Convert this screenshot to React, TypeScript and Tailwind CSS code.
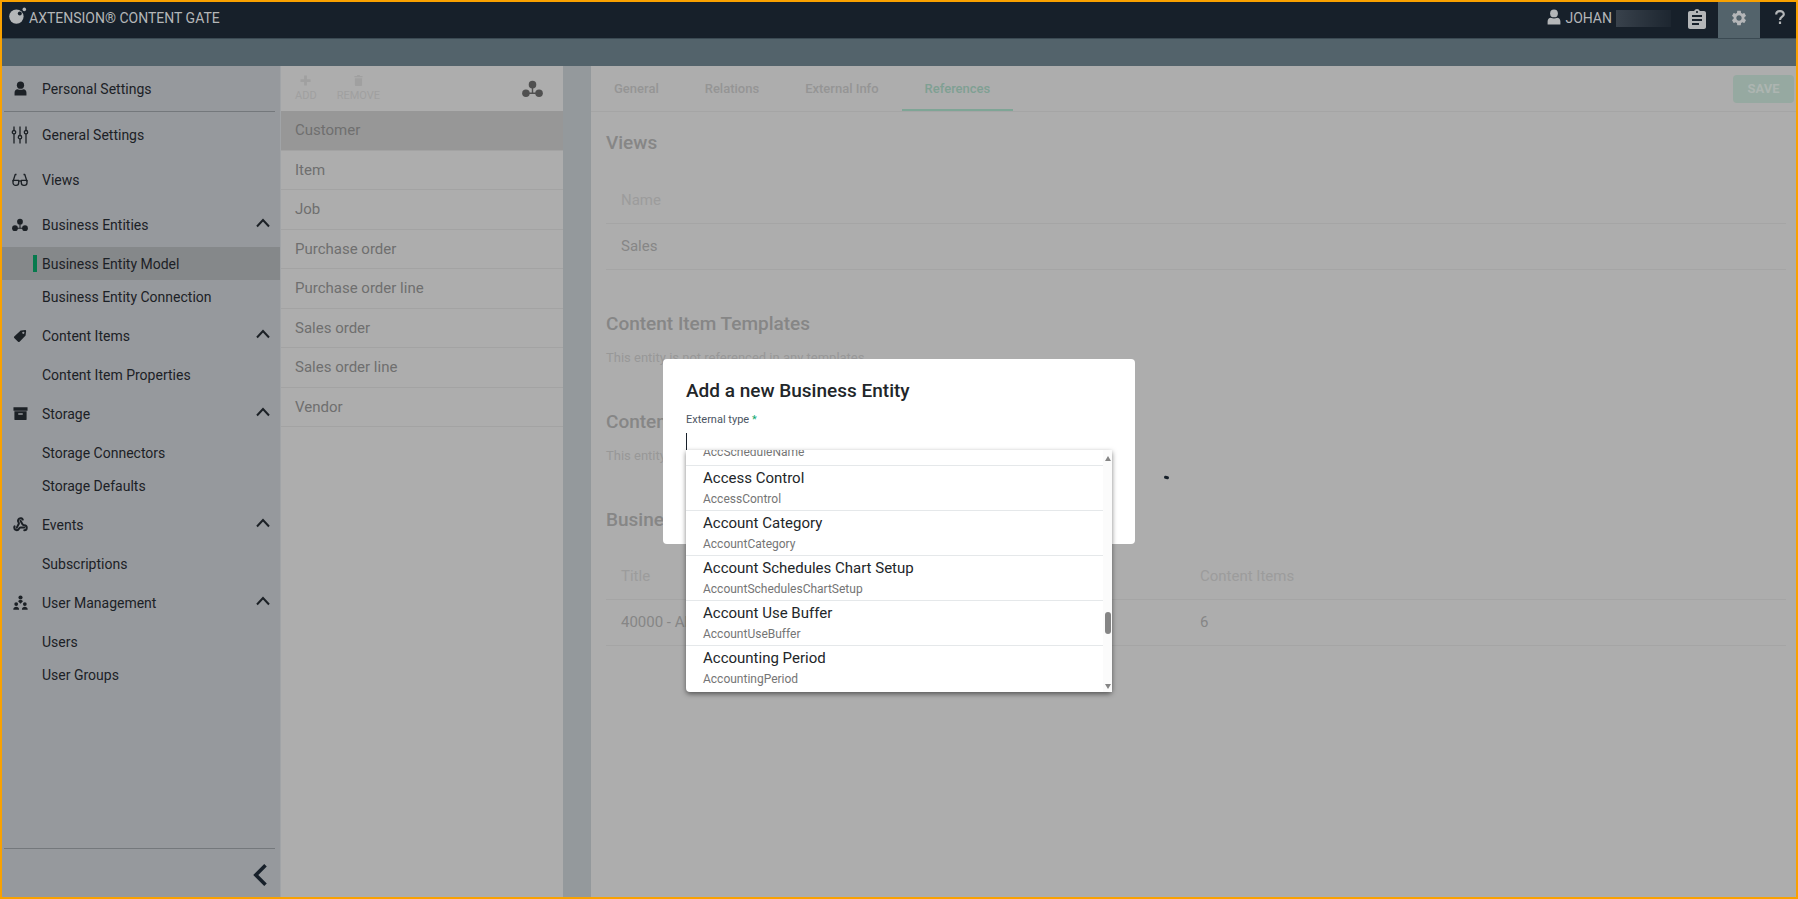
import { ReactNode } from "react";
import { MdAssignment, MdSettings } from "react-icons/md";

type IconProps = { className?: string };

function PersonIcon({ className }: IconProps) {
  return (
    <svg viewBox="1 0 14 16" className={className} fill="currentColor" aria-hidden>
      <circle cx="8" cy="4.4" r="3.9" />
      <path d="M1.600 15.500v-3C1.600 10.200 3 8.900 4.800 8.700c1.900 1 4.500 1 6.400 0 1.800.2 3.200 1.500 3.200 3.800v3z" />
    </svg>
  );
}

function SlidersIcon({ className }: IconProps) {
  return (
    <svg viewBox="0 0 18 18" className={className} fill="none" stroke="currentColor" strokeWidth="1.300" aria-hidden>
      <path d="M3 0.500v4M3 8v9.500M9 0.500v9M9 13v4.500M15 0.500v4M15 8v9.500" />
      <circle cx="3" cy="6.200" r="1.700" />
      <circle cx="9" cy="11.200" r="1.700" />
      <circle cx="15" cy="6.200" r="1.700" />
    </svg>
  );
}

function GlassesIcon({ className }: IconProps) {
  return (
    <svg viewBox="0 0 16 16" className={className} fill="none" stroke="currentColor" strokeWidth="1.300" strokeLinejoin="round" aria-hidden>
      <path d="M4.500 2.500H3.200L1 9.500M11.500 2.500h1.300L15 9.500M6.700 9.300c.8-.6 1.800-.6 2.600 0" />
      <path d="M1 8.300h5.700v2.500a2.600 2.600 0 0 1-2.600 2.600H3.600A2.600 2.600 0 0 1 1 10.800zM9.300 8.300H15v2.500a2.600 2.600 0 0 1-2.600 2.600h-.5a2.600 2.600 0 0 1-2.600-2.600z" />
    </svg>
  );
}

function EntityIcon({ className }: IconProps) {
  return (
    <svg viewBox="0 0 24 20" className={className} fill="currentColor" aria-hidden>
      <circle cx="12" cy="5" r="4.300" />
      <circle cx="4.500" cy="14.800" r="4.300" />
      <circle cx="19.500" cy="14.800" r="4.300" />
      <path d="M11.200 5h1.600v9h6v1.600h-13V14h5.400z" />
    </svg>
  );
}

function TagIcon({ className }: IconProps) {
  return (
    <svg viewBox="0 0 16 16" className={className} fill="currentColor" aria-hidden>
      <path fillRule="evenodd" d="M9.300 1.800 14 1.200c.6 0 1 .4 1 1l-.6 4.800c0 .4-.2.7-.5 1l-6.400 6.600c-.5.5-1.200.5-1.700 0L1.400 10.300c-.5-.5-.5-1.200 0-1.700L8.200 2.300c.3-.3.700-.5 1.100-.5zM11.800 3.100a1.300 1.300 0 1 0 0 2.600 1.300 1.300 0 0 0 0-2.600z" />
    </svg>
  );
}

function ArchiveIcon({ className }: IconProps) {
  return (
    <svg viewBox="0 0 16 16" className={className} fill="currentColor" aria-hidden>
      <path fillRule="evenodd" d="M.5 1.200h15v3.900H.5zM1.500 5.700h13v8.300a1 1 0 0 1-1 1h-11a1 1 0 0 1-1-1zM5.600 7.600v1.800h4.800V7.600z" />
    </svg>
  );
}

function WebhookIcon({ className }: IconProps) {
  return (
    <svg viewBox="0 0 24 24" className={className} fill="none" stroke="currentColor" strokeWidth="3.200" strokeLinecap="round" aria-hidden>
      <path d="M18 16.980h-5.990c-1.100 0-1.950.94-2.480 1.900A4 4 0 0 1 2 17c.010-.7.200-1.400.570-2" />
      <path d="m6 17 3.130-5.780c.530-.970.100-2.180-.500-3.100a4 4 0 1 1 6.890-4.060" />
      <path d="m12 6 3.130 5.730C15.660 12.700 16.900 13 18 13a4 4 0 0 1 0 8" />
    </svg>
  );
}

function UsersIcon({ className }: IconProps) {
  return (
    <svg viewBox="0 0 16 16" className={className} fill="currentColor" aria-hidden>
      <circle cx="8" cy="2.600" r="2.200" />
      <circle cx="3.400" cy="9.600" r="2" />
      <circle cx="12.600" cy="9.600" r="2" />
      <path d="M5.400 6.600c.8-1.600 4.400-1.600 5.200 0L8 9.200zM.3 15.600c0-4 6.200-4 6.200 0zM9.500 15.600c0-4 6.200-4 6.200 0z" />
    </svg>
  );
}

function ChevronUp() {
  return (
    <svg viewBox="0 0 14 10" className="h-[10px] w-[14px]" fill="none" stroke="currentColor" strokeWidth="2" aria-hidden>
      <path d="M1 8.500 7 2l6 6.500" />
    </svg>
  );
}

type Section = {
  label: string;
  icon: ReactNode;
  children?: string[];
};

const sections: Section[] = [
  { label: "General Settings", icon: <SlidersIcon className="h-[18px] w-[18px]" /> },
  { label: "Views", icon: <GlassesIcon className="h-4 w-4" /> },
  {
    label: "Business Entities",
    icon: <EntityIcon className="h-[14px] w-4" />,
    children: ["Business Entity Model", "Business Entity Connection"],
  },
  {
    label: "Content Items",
    icon: <TagIcon className="h-[14px] w-[14px]" />,
    children: ["Content Item Properties"],
  },
  {
    label: "Storage",
    icon: <ArchiveIcon className="h-[15px] w-[15px]" />,
    children: ["Storage Connectors", "Storage Defaults"],
  },
  { label: "Events", icon: <WebhookIcon className="h-[15px] w-[15px]" />, children: ["Subscriptions"] },
  {
    label: "User Management",
    icon: <UsersIcon className="h-[15px] w-[15px]" />,
    children: ["Users", "User Groups"],
  },
];

const entities = [
  "Customer",
  "Item",
  "Job",
  "Purchase order",
  "Purchase order line",
  "Sales order",
  "Sales order line",
  "Vendor",
];

const tabs = ["General", "Relations", "External Info", "References"];

const options = [
  { name: "Access Control", id: "AccessControl" },
  { name: "Account Category", id: "AccountCategory" },
  { name: "Account Schedules Chart Setup", id: "AccountSchedulesChartSetup" },
  { name: "Account Use Buffer", id: "AccountUseBuffer" },
  { name: "Accounting Period", id: "AccountingPeriod" },
];

function Header() {
  return (
    <header className="flex h-9 items-stretch bg-[#17202a] text-[#b4b6b8]">
      <div className="flex items-center gap-[2px] pb-1 pl-[7px]">
        <svg viewBox="0 0 18 18" className="mb-1 h-[18px] w-[18px]" aria-hidden>
          <circle cx="7.400" cy="9.600" r="7.200" fill="currentColor" />
          <circle cx="10.800" cy="6.500" r="2" fill="#17202a" />
          <circle cx="15.300" cy="2.400" r="1.800" fill="currentColor" />
        </svg>
        <span className="text-sm">AXTENSION® CONTENT GATE</span>
      </div>
      <div className="ml-auto flex">
        <button className="flex items-center pb-1 text-sm">
          <PersonIcon className="mb-[2px] h-4 w-[14px]" />
          <span className="mr-[4px] ml-1">JOHAN</span>
          <span className="h-[17px] w-[55px] bg-linear-to-r from-[#39424c] to-[#1d2630]" />
        </button>
        <button aria-label="Clipboard" className="flex w-[47px] items-center justify-center pl-1">
          <MdAssignment className="h-6 w-6" />
        </button>
        <button aria-label="Settings" className="flex w-[42px] items-center justify-center bg-[#53636b] pb-1">
          <MdSettings className="h-[18px] w-[18px]" />
        </button>
        <button aria-label="Help" className="flex w-[36px] items-center justify-center pb-[6px] pl-1">
          <svg viewBox="0 0 10 14" className="h-[14px] w-[10px]" fill="none" stroke="currentColor" strokeWidth="2.200" aria-hidden>
            <path d="M1.200 4.500C1.200 0 8.800 0 8.800 4.200 8.800 6.800 5 6.600 5 10M5 11.600V14" />
          </svg>
        </button>
      </div>
    </header>
  );
}

function Sidebar() {
  return (
    <nav className="flex w-[279px] shrink-0 flex-col border-r border-[#a1a4a7] bg-[#96999d] text-sm text-[#1c2126]">
      <a href="#personal" className="mr-[5px] ml-[2px] flex h-[46px] items-center border-b border-[#74787c]">
        <span className="flex w-[34px] justify-center pr-[2px]">
          <PersonIcon className="h-[15px] w-[13px]" />
        </span>
        <span className="pl-1">Personal Settings</span>
      </a>
      {sections.map((section) => (
        <div key={section.label}>
          <button className="flex h-[45px] w-full items-center pr-[10px]">
            <span className="flex w-9 justify-center">{section.icon}</span>
            <span className="pl-1">{section.label}</span>
            {section.children && (
              <span className="ml-auto pb-1">
                <ChevronUp />
              </span>
            )}
          </button>
          {section.children?.map((child) =>
            child === "Business Entity Model" ? (
              <a key={child} href="#model" className="flex h-[33px] items-center bg-[#85888a] pl-[31px]">
                <span className="mr-[5px] h-[17px] w-1 bg-[#067a4d]" />
                {child}
              </a>
            ) : (
              <a key={child} href="#item" className="flex h-[33px] items-center pl-10">
                {child}
              </a>
            ),
          )}
        </div>
      ))}
      <div className="mt-auto mr-[5px] ml-[2px] flex h-[49px] items-center justify-end border-t border-[#74787c] pt-1 pr-2">
        <button aria-label="Collapse">
          <svg viewBox="0 0 14 22" className="h-[22px] w-[14px]" fill="none" stroke="#17202a" strokeWidth="3.600" aria-hidden>
            <path d="M12.500 1.300 2.800 11l9.700 9.700" />
          </svg>
        </button>
      </div>
    </nav>
  );
}

function EntityList() {
  return (
    <section className="w-[282px] shrink-0 bg-[#adadad]">
      <div className="flex h-[45px] items-center pr-5 pl-[14px] text-[11px] text-[#a0a0a0]">
        <button className="flex flex-col items-center pt-[2px]" disabled>
          <svg viewBox="0 0 12 12" className="mb-[2px] h-[11px] w-[11px]" fill="currentColor" aria-hidden>
            <path d="M4.500 0.500h3v4h4v3h-4v4h-3v-4h-4v-3h4z" />
          </svg>
          ADD
        </button>
        <button className="ml-[20px] flex flex-col items-center pt-[2px]" disabled>
          <svg viewBox="0 0 10 12" className="mb-[2px] h-[11px] w-[9px]" fill="currentColor" aria-hidden>
            <path d="M3.500 0h3v1H9.500v1.500h-9V1h3zM1 3.500h8V11a1 1 0 0 1-1 1H2a1 1 0 0 1-1-1z" />
          </svg>
          REMOVE
        </button>
        <button aria-label="Entity diagram" className="ml-auto text-[#505050]">
          <EntityIcon className="h-[18px] w-[21px]" />
        </button>
      </div>
      <ul className="text-[15px] text-[#6f6f6f]">
        {entities.map((entity, i) => (
          <li key={entity} className="h-10 border-b border-[#a3a3a3] even:h-[39px]">
            <button
              className={
                i === 0 ? "h-full w-full bg-[#979797] pl-[14px] text-left" : "h-full w-full pl-[14px] text-left"
              }
            >
              {entity}
            </button>
          </li>
        ))}
      </ul>
    </section>
  );
}

function References() {
  return (
    <main className="min-w-0 flex-1 bg-[#adadad] text-[#868686]">
      <div className="flex h-[46px] items-stretch border-b border-[#a5a5a5]">
        {tabs.map((tab) => (
          <button
            key={tab}
            className={
              tab === "References"
                ? "border-b-2 border-[#7fa596] px-[23px] pt-[2px] text-[13px] font-medium text-[#7fa093]"
                : "px-[23px] text-[13px] font-medium text-[#959595]"
            }
          >
            {tab}
          </button>
        ))}
        <button className="my-auto mr-[2px] ml-auto h-7 w-[61px] rounded bg-[#96a9a1] text-[13px] font-bold text-[#adb5b1]">
          SAVE
        </button>
      </div>
      <div className="pr-[10px] pl-[15px]">
        <h2 className="pt-[17px] text-[19px] leading-7 font-medium">Views</h2>
        <table className="mt-5 w-full text-left text-[15px]">
          <thead>
            <tr className="h-[46px] border-b border-[#a5a5a5] text-[#9c9c9c]">
              <th className="pl-[15px] font-normal">Name</th>
            </tr>
          </thead>
          <tbody>
            <tr className="h-[46px] border-b border-[#a5a5a5]">
              <td className="pl-[15px]">Sales</td>
            </tr>
          </tbody>
        </table>
        <h2 className="mt-10 text-[19px] leading-7 font-medium">Content Item Templates</h2>
        <p className="mt-[10px] text-[13px] leading-5 text-[#989898]">This entity is not referenced in any templates</p>
        <h2 className="mt-10 text-[19px] leading-7 font-medium">Content Item Profiles</h2>
        <p className="mt-[10px] text-[13px] leading-5 text-[#989898]">This entity is not referenced in any profiles</p>
        <h2 className="mt-10 text-[19px] leading-7 font-medium">Business Entities</h2>
        <table className="mt-5 w-full table-fixed text-left text-[15px]">
          <thead>
            <tr className="h-[46px] border-b border-[#a5a5a5] text-[#9c9c9c]">
              <th className="w-1/2 pl-[15px] font-normal">Title</th>
              <th className="w-1/2 pl-1 font-normal">Content Items</th>
            </tr>
          </thead>
          <tbody>
            <tr className="h-[46px] border-b border-[#a5a5a5]">
              <td className="pl-[15px]">40000 - Alpine</td>
              <td className="pl-1">6</td>
            </tr>
          </tbody>
        </table>
      </div>
    </main>
  );
}

function AddEntityDialog() {
  return (
    <div role="dialog" aria-labelledby="dialog-title" className="relative h-[185px] w-[472px] rounded bg-white px-[23px] pt-[18px]">
      <h1 id="dialog-title" className="text-[19px] leading-7 font-medium text-[#222629]">
        Add a new Business Entity
      </h1>
      <label htmlFor="external-type" className="mt-[5px] block text-[11px] leading-5 text-[#4b5563]">
        External type <span className="text-[#10a870]">*</span>
      </label>
      <input id="external-type" className="mt-[3px] block h-5 w-full border-l border-[#17202a] outline-none" />
      <div className="absolute top-[91px] left-[23px] flex h-[242px] w-[426px] rounded-b-sm bg-white shadow-[0_2px_5px_rgba(0,0,0,0.5)]">
        <ul className="flex flex-1 flex-col justify-end overflow-hidden">
          <li className="shrink-0 border-b border-[#e5e8ea] pb-[3px] pl-[17px] text-[12px] leading-5 text-[#757575]">AccScheduleName</li>
          {options.map((option) => (
            <li key={option.id} className="h-[45px] shrink-0 border-b border-[#e5e8ea] pl-[17px] last:h-[46px] last:border-b-0">
              <p className="text-[15px] leading-6 text-[#222629]">{option.name}</p>
              <p className="text-[12px] leading-[18px] text-[#757575]">{option.id}</p>
            </li>
          ))}
        </ul>
        <div className="flex w-[9px] flex-col items-center bg-[#fbfbfb] pt-[6px] pb-[3px]">
          <span className="border-x-3 border-b-5 border-x-transparent border-b-[#858585]" />
          <span className="mt-[151px] h-[22px] w-[6px] rounded-full bg-[#858585]" />
          <span className="mt-auto border-x-3 border-t-5 border-x-transparent border-t-[#858585]" />
        </div>
      </div>
    </div>
  );
}

export default function App() {
  return (
    <div className="relative flex h-screen flex-col overflow-hidden border-2 border-[#f9a100] bg-[#adadad] font-[Roboto,sans-serif]">
      <Header />
      <div className="h-7 shrink-0 border-t border-[#3b4a53] bg-[#53636b]" />
      <div className="flex min-h-0 flex-1">
        <Sidebar />
        <EntityList />
        <div className="w-7 shrink-0 bg-[#94999c]" />
        <References />
      </div>
      <div className="absolute inset-0 flex items-center justify-center pt-1">
        <AddEntityDialog />
      </div>
      <span className="absolute top-[474px] left-[1162px] h-[3px] w-[5px] rotate-12 rounded-full bg-[#17202a]" />
    </div>
  );
}
